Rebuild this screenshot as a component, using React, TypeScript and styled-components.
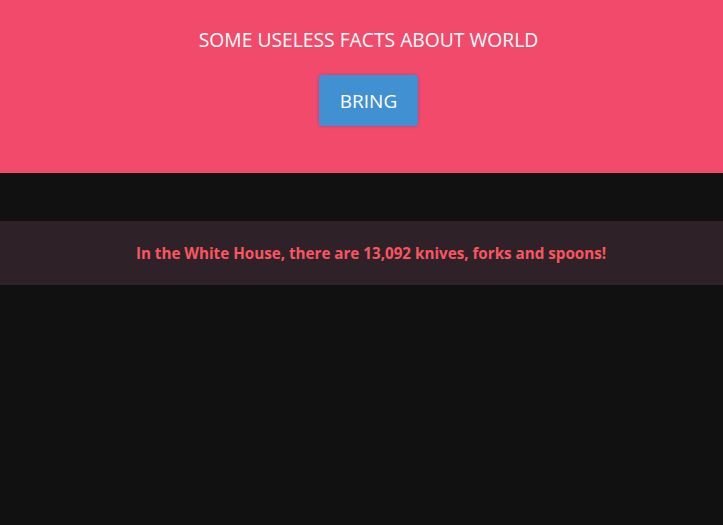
import React from "react";
import styled, { createGlobalStyle } from "styled-components";

const Global = createGlobalStyle`
  html, body { margin: 0; padding: 0; background: #111111; }
  body { font-family: "Open Sans", "Noto Sans", sans-serif; }
`;

const Page = styled.div`
  min-height: 525px;
  background: #111111;
`;

const Header = styled.header`
  height: 173px;
  background: #f24a6a;
  display: flex;
  flex-direction: column;
  align-items: center;
  padding: 27px 0 0 14px;
  box-sizing: border-box;
`;

const Title = styled.h1`
  margin: 0;
  font-size: 19.3px;
  font-weight: 400;
  color: #ffffff;
  line-height: 26px;
`;

const Button = styled.button`
  margin-top: 22px;
  width: 99px;
  height: 51px;
  border: none;
  border-radius: 3px;
  background: #4190d2;
  color: #ffffff;
  font-family: inherit;
  font-size: 19px;
  box-shadow: 0 0 3px rgba(120, 60, 160, 0.6);
  cursor: pointer;
`;

const FactBand = styled.section`
  margin-top: 48px;
  height: 64px;
  background: #2e2228;
  display: flex;
  align-items: center;
  justify-content: center;
  padding-left: 19px;
  box-sizing: border-box;
`;

const Fact = styled.p`
  margin: 0;
  color: #fa5560;
  font-weight: 700;
  font-size: 15.2px;
`;

export default function App() {
  return (
    <Page>
      <Global />
      <Header>
        <Title>SOME USELESS FACTS ABOUT WORLD</Title>
        <Button>BRING</Button>
      </Header>
      <FactBand>
        <Fact>In the White House, there are 13,092 knives, forks and spoons!</Fact>
      </FactBand>
    </Page>
  );
}
